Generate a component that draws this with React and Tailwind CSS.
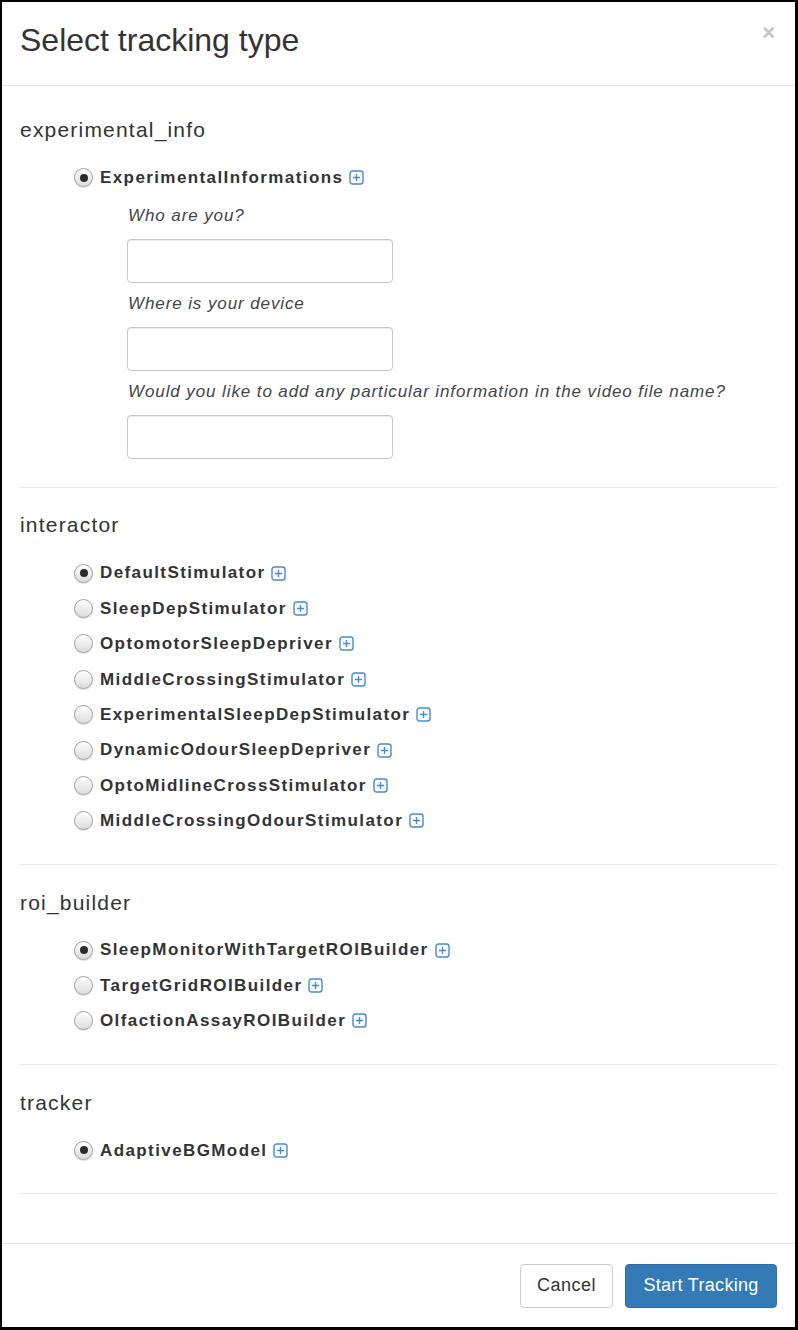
import React from 'react';

const sections = [
  { name: 'interactor', pt: 'pt-[23px]', options: ['DefaultStimulator', 'SleepDepStimulator', 'OptomotorSleepDepriver', 'MiddleCrossingStimulator', 'ExperimentalSleepDepStimulator', 'DynamicOdourSleepDepriver', 'OptoMidlineCrossStimulator', 'MiddleCrossingOdourStimulator'] },
  { name: 'roi_builder', pt: 'pt-[24px]', options: ['SleepMonitorWithTargetROIBuilder', 'TargetGridROIBuilder', 'OlfactionAssayROIBuilder'] },
  { name: 'tracker', pt: 'pt-[24px]', options: ['AdaptiveBGModel'] },
];

const fields = ['Who are you?', 'Where is your device', 'Would you like to add any particular information in the video file name?'];

function PlusBox() {
  return (
    <svg width="15" height="15" viewBox="0 0 15 15" className="shrink-0">
      <rect x="1" y="1" width="13" height="13" rx="2.5" fill="white" stroke="#4a8bd0" strokeWidth="1.4" />
      <path d="M7.5 4v7M4 7.5h7" stroke="#4a8bd0" strokeWidth="1.4" />
    </svg>
  );
}

function Radio({ checked }) {
  return (
    <span className="w-[19px] h-[19px] shrink-0 rounded-full border border-[#a3a3a3] bg-gradient-to-b from-white to-[#dcdcdc] shadow-[0_1px_1px_rgba(0,0,0,0.15)] flex items-center justify-center">
      {checked && <span className="w-[8px] h-[8px] rounded-full bg-[#2b2b2b]" />}
    </span>
  );
}

function Option({ label, checked }) {
  return (
    <div className="h-[35.4px] flex items-center pl-[54px]">
      <Radio checked={checked} />
      <span className="ml-[7px] text-[17px] font-bold text-[#333] tracking-[1.4px]">{label}</span>
      <span className="ml-[6px]"><PlusBox /></span>
    </div>
  );
}

function SectionTitle({ children }) {
  return <h2 className="h-[28px] leading-[28px] text-[21px] tracking-[1.2px] text-[#333]">{children}</h2>;
}

function Divider() {
  return <div className="h-px bg-[#e8e8e8]" />;
}

export default function App() {
  return (
    <div className="w-[798px] h-[1330px] bg-white border-l-2 border-t-2 border-r-[3px] border-b-[3px] border-black flex flex-col font-['Liberation_Sans',Arial,sans-serif] text-[#333]">
      <div className="h-[84px] shrink-0 border-b border-[#e5e5e5] px-[18px] pb-[8px] flex items-center justify-between">
        <h1 className="text-[32px] leading-none">Select tracking type</h1>
        <span className="text-[22px] font-bold text-[#c4c4c4] mr-[2px] -mt-[14px]">×</span>
      </div>

      <div className="flex-1 px-[18px]">
        <div className="pt-[30px]">
          <SectionTitle>experimental_info</SectionTitle>
          <div className="mt-[16px]">
            <Option label="ExperimentalInformations" checked />
          </div>
          <div className="pl-[107px]">
            {fields.map((f) => (
              <div key={f} className="mt-[10px]">
                <div className="h-[22px] leading-[22px] text-[17px] tracking-[0.9px] italic text-[#444] pl-px">{f}</div>
                <input type="text" className="mt-[12px] block w-[266px] h-[44px] rounded border border-[#c8c8c8] shadow-[inset_0_1px_1px_rgba(0,0,0,0.075)]" />
              </div>
            ))}
          </div>
          <div className="mt-[28px]"><Divider /></div>
        </div>

        {sections.map((s) => (
          <div key={s.name} className={s.pt}>
            <SectionTitle>{s.name}</SectionTitle>
            <div className="mt-[16px]">
              {s.options.map((o, j) => (
                <Option key={o} label={o} checked={j === 0} />
              ))}
            </div>
            <div className="mt-[25px]"><Divider /></div>
          </div>
        ))}
      </div>

      <div className="h-[84px] shrink-0 border-t border-[#e5e5e5] px-[18px] flex items-center justify-end gap-[12px]">
        <button className="h-[44px] w-[93px] rounded border border-[#ccc] bg-white text-[18px] tracking-[0.5px] text-[#333]">Cancel</button>
        <button className="h-[44px] w-[152px] rounded border border-[#2e6da4] bg-[#337ab7] text-[18px] tracking-[0.3px] text-white">Start Tracking</button>
      </div>
    </div>
  );
}
